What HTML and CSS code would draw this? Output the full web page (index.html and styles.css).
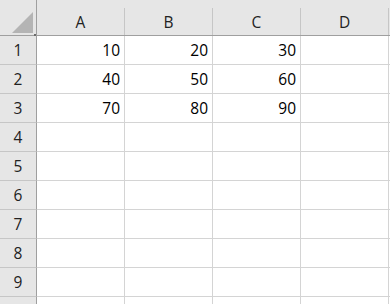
FILE: index.html
```html
<!DOCTYPE html>
<html lang="en">
<head>
    <meta charset="UTF-8">
    <title>Sheet</title>
    <link rel="stylesheet" href="styles.css">
</head>
<body>
    <div class="sheet">
        <div class="corner">
            <svg class="corner-mark" width="36" height="36" viewBox="0 0 36 36">
                <polygon points="12,33 33,12 33,33" fill="#b4b4b4"/>
                <rect x="34" y="34" width="2" height="2" fill="#6b6b6b"/>
            </svg>
        </div>
        <div class="col-head"><span>A</span></div>
        <div class="col-head"><span>B</span></div>
        <div class="col-head"><span>C</span></div>
        <div class="col-head"><span>D</span></div>
        <div class="col-head"><span></span></div>

        <div class="row-head">1</div>
        <div class="cell num">10</div>
        <div class="cell num">20</div>
        <div class="cell num">30</div>
        <div class="cell"></div>
        <div class="cell"></div>

        <div class="row-head">2</div>
        <div class="cell num">40</div>
        <div class="cell num">50</div>
        <div class="cell num">60</div>
        <div class="cell"></div>
        <div class="cell"></div>

        <div class="row-head">3</div>
        <div class="cell num">70</div>
        <div class="cell num">80</div>
        <div class="cell num">90</div>
        <div class="cell"></div>
        <div class="cell"></div>

        <div class="row-head">4</div>
        <div class="cell"></div><div class="cell"></div><div class="cell"></div><div class="cell"></div><div class="cell"></div>
        <div class="row-head">5</div>
        <div class="cell"></div><div class="cell"></div><div class="cell"></div><div class="cell"></div><div class="cell"></div>
        <div class="row-head">6</div>
        <div class="cell"></div><div class="cell"></div><div class="cell"></div><div class="cell"></div><div class="cell"></div>
        <div class="row-head">7</div>
        <div class="cell"></div><div class="cell"></div><div class="cell"></div><div class="cell"></div><div class="cell"></div>
        <div class="row-head">8</div>
        <div class="cell"></div><div class="cell"></div><div class="cell"></div><div class="cell"></div><div class="cell"></div>
        <div class="row-head">9</div>
        <div class="cell"></div><div class="cell"></div><div class="cell"></div><div class="cell"></div><div class="cell"></div>
        <div class="row-head"></div>
        <div class="cell"></div><div class="cell"></div><div class="cell"></div><div class="cell"></div><div class="cell"></div>
    </div>
</body>
</html>
```

FILE: styles.css
```css
body {
    margin: 0;
    background: #fff;
    font-family: "Open Sans", "Noto Sans", sans-serif;
    font-size: 15.5px;
    color: #000;
    overflow: hidden;
}
.sheet {
    display: grid;
    grid-template-columns: 37px 88px 88px 88px 88px 1fr;
    grid-auto-rows: 29px;
    grid-template-rows: 36px;
    width: 390px;
    height: 304px;
    overflow: hidden;
}
.corner {
    background: #e6e6e6;
    border-right: 1px solid #9f9f9f;
    border-bottom: 1px solid #9f9f9f;
    position: relative;
}
.corner-mark {
    position: absolute;
    left: 0;
    top: 0;
}
.col-head {
    background: #e6e6e6;
    border-bottom: 1px solid #9f9f9f;
    padding-top: 8px;
    display: flex;
}
.col-head span {
    flex: 1;
    border-right: 1px solid #c6c6c6;
    display: flex;
    align-items: center;
    justify-content: center;
    color: #222;
}
.row-head {
    background: #e6e6e6;
    border-right: 1px solid #9f9f9f;
    border-bottom: 1px solid #c6c6c6;
    display: flex;
    align-items: center;
    justify-content: center;
    color: #222;
}
.cell {
    border-right: 1px solid #d4d4d4;
    border-bottom: 1px solid #d4d4d4;
    display: flex;
    align-items: center;
    padding: 0 4px;
}
.num {
    justify-content: flex-end;
}
```
